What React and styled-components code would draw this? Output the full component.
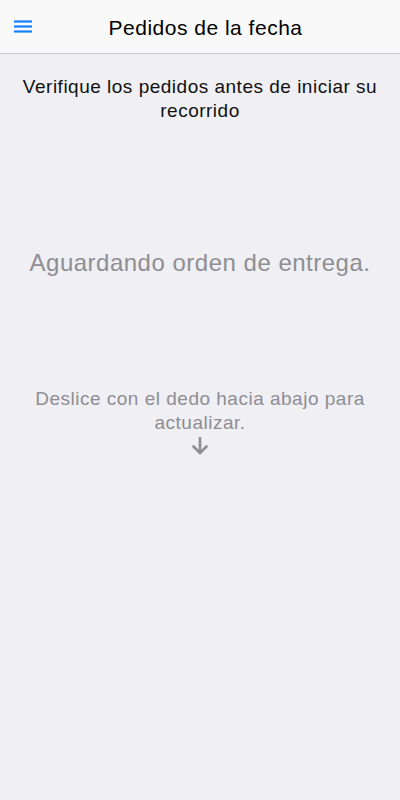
import styled, { createGlobalStyle } from "styled-components";

const GlobalStyle = createGlobalStyle`
  html, body {
    margin: 0;
    padding: 0;
    background: #efeff4;
    font-family: "Liberation Sans", Arial, sans-serif;
  }
`;

const Screen = styled.div`
  width: 400px;
  min-height: 800px;
  background: #efeff4;
  display: flex;
  flex-direction: column;
`;

const NavBar = styled.div`
  height: 54px;
  background: #f9f9f9;
  border-bottom: 1px solid #c8c7cc;
  display: grid;
  grid-template-columns: 66px 1fr 55px;
  align-items: center;
  box-sizing: border-box;
`;

const MenuButton = styled.button`
  border: 0;
  background: transparent;
  padding: 0 0 0 13px;
  height: 100%;
  display: flex;
  align-items: center;
  cursor: pointer;
`;

const NavTitle = styled.h1`
  margin: 0;
  font-size: 21px;
  letter-spacing: 0.5px;
  font-weight: 400;
  color: #000;
  text-align: center;
  padding-top: 3px;
  white-space: nowrap;
`;

const Intro = styled.p`
  margin: 21px 10px 0;
  font-size: 19px;
  letter-spacing: 0.5px;
  line-height: 24px;
  color: #111;
  text-align: center;
`;

const Waiting = styled.p`
  margin: 125px 0 0;
  font-size: 24px;
  letter-spacing: 0.5px;
  line-height: 30px;
  color: #8e8e93;
  text-align: center;
`;

const Hint = styled.p`
  margin: 109px 20px 0;
  font-size: 19px;
  letter-spacing: 0.5px;
  line-height: 24px;
  color: #8e8e93;
  text-align: center;
`;

const ArrowHolder = styled.div`
  display: flex;
  justify-content: center;
  margin-top: 1px;
`;

function MenuIcon() {
  return (
    <svg width="20" height="16" viewBox="0 0 20 16">
      <g stroke="#147efb" strokeWidth="2.2">
        <line x1="1" y1="2.5" x2="19" y2="2.5" />
        <line x1="1" y1="7.5" x2="19" y2="7.5" />
        <line x1="1" y1="12.5" x2="19" y2="12.5" />
      </g>
    </svg>
  );
}

function DownArrow() {
  return (
    <svg width="18" height="20" viewBox="0 0 18 20">
      <g stroke="#8e8e93" strokeWidth="2.6" fill="none" strokeLinecap="round" strokeLinejoin="round">
        <line x1="9" y1="2" x2="9" y2="17" />
        <polyline points="2.5,10.5 9,17 15.5,10.5" />
      </g>
    </svg>
  );
}

export default function App() {
  return (
    <Screen>
      <GlobalStyle />
      <NavBar>
        <MenuButton aria-label="Menú">
          <MenuIcon />
        </MenuButton>
        <NavTitle>Pedidos de la fecha</NavTitle>
        <span />
      </NavBar>
      <Intro>Verifique los pedidos antes de iniciar su recorrido</Intro>
      <Waiting>Aguardando orden de entrega.</Waiting>
      <Hint>Deslice con el dedo hacia abajo para actualizar.</Hint>
      <ArrowHolder>
        <DownArrow />
      </ArrowHolder>
    </Screen>
  );
}
